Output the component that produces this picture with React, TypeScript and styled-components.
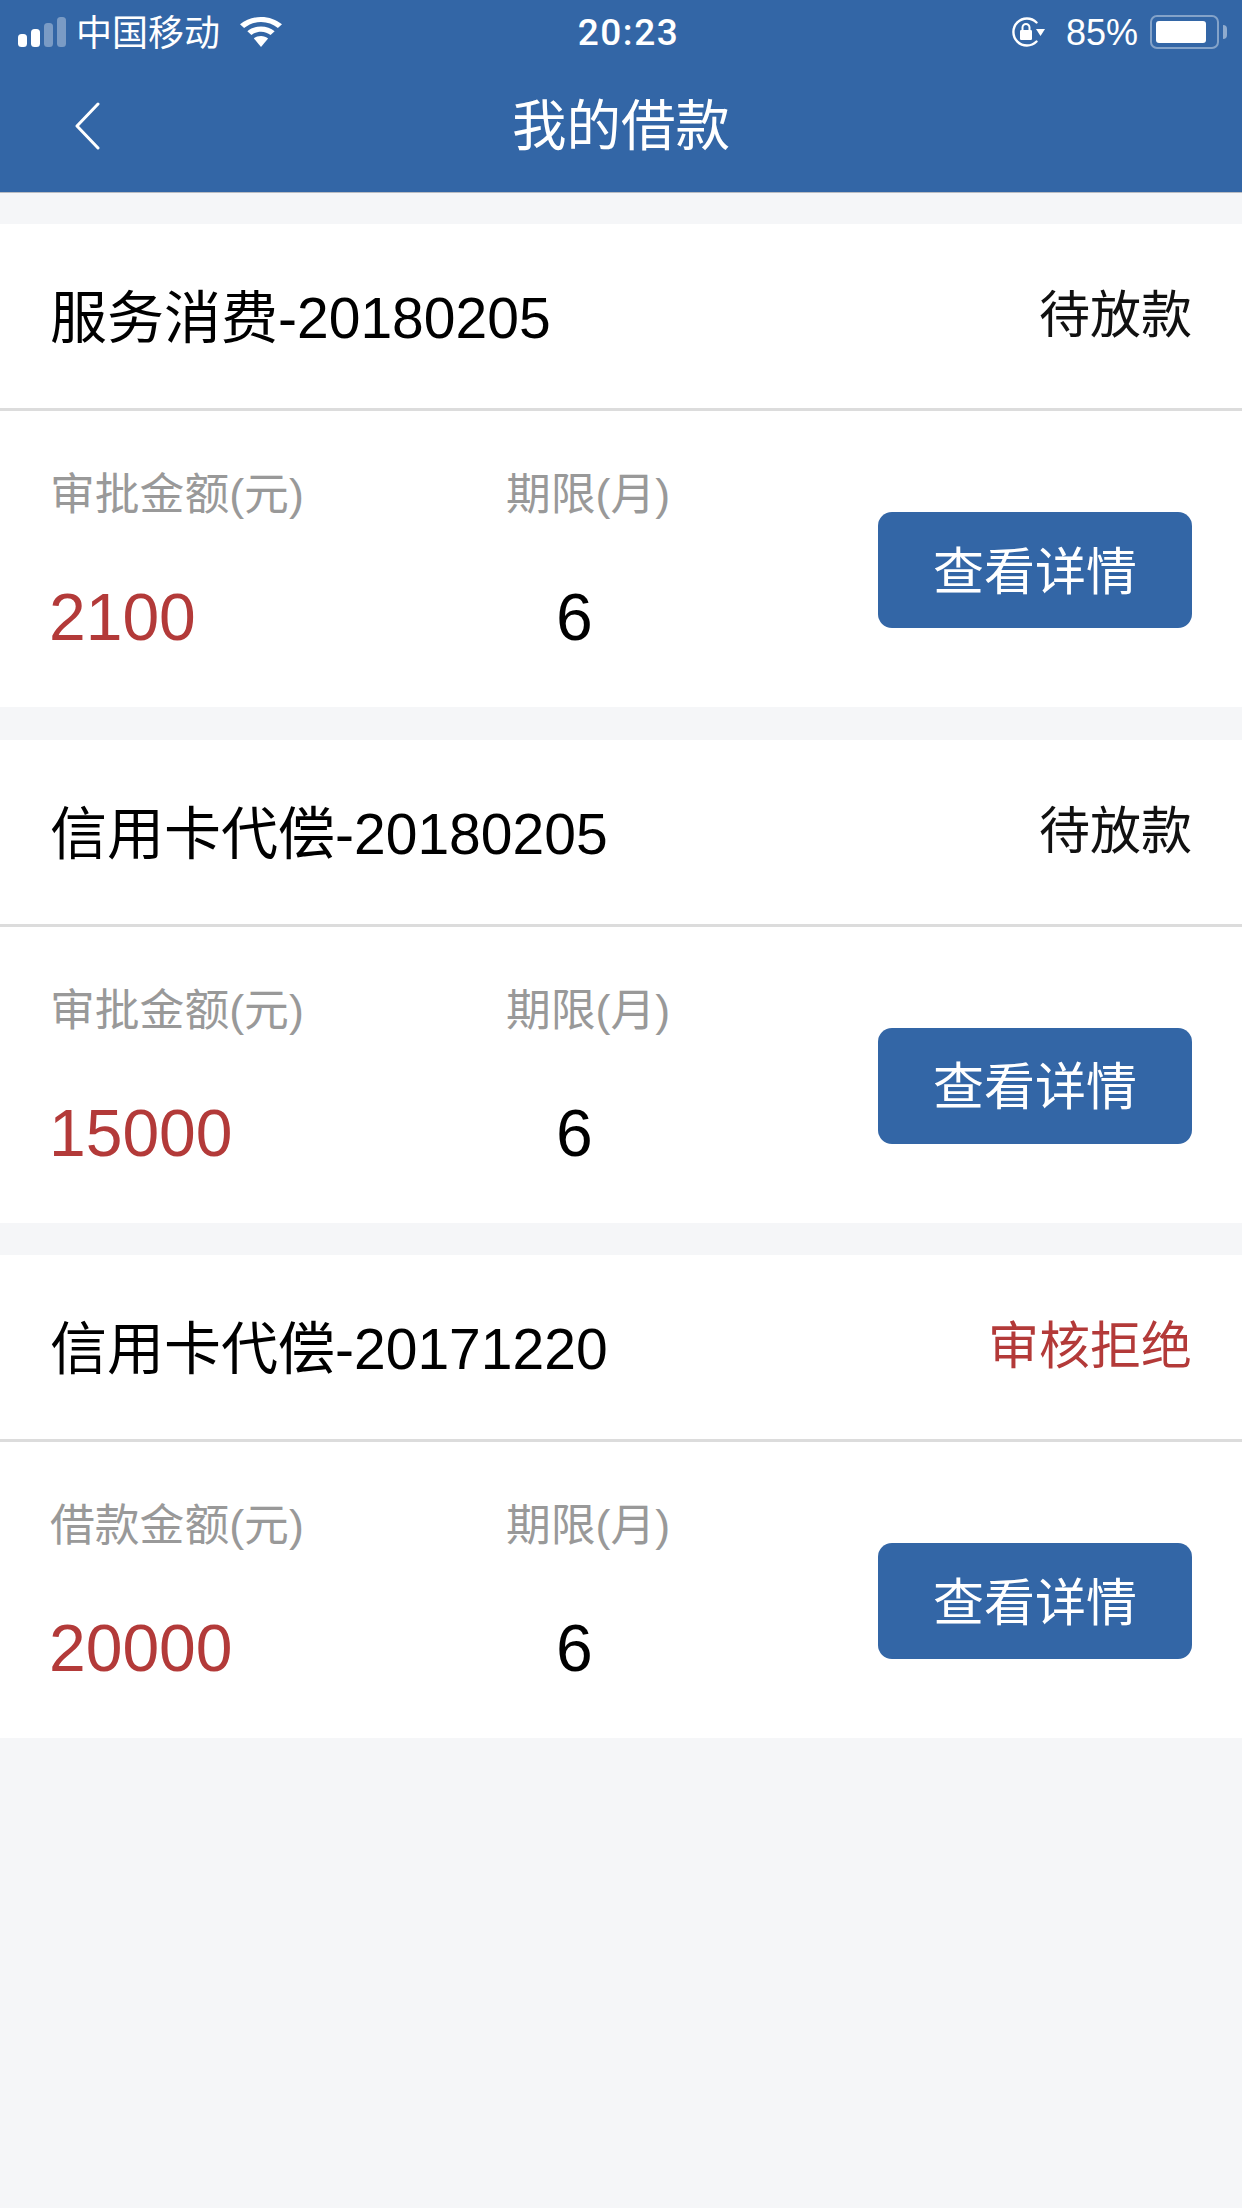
import React from 'react';
import styled, { createGlobalStyle } from 'styled-components';

const GlobalStyle = createGlobalStyle`
  html, body {
    margin: 0;
    padding: 0;
    background: #f5f6f8;
  }

  body {
    font-family: "Liberation Sans", "Noto Sans CJK SC", sans-serif;
  }
`;

const loans = [
  { title: '服务消费-20180205', status: '待放款', rejected: false, label: '审批金额(元)', amount: '2100' },
  { title: '信用卡代偿-20180205', status: '待放款', rejected: false, label: '审批金额(元)', amount: '15000' },
  { title: '信用卡代偿-20171220', status: '审核拒绝', rejected: true, label: '借款金额(元)', amount: '20000' },
];

const App: React.FC = () => (
  <Page>
    <GlobalStyle />
    <Header>
      <StatusBar>
        <StatusLeft>
          <svg width="48" height="30" viewBox="0 0 48 30" fill="#fff">
            <rect x="0" y="17" width="9" height="13" rx="3.500" />
            <rect x="13" y="12" width="9" height="18" rx="3.500" />
            <rect x="26" y="6" width="9" height="24" rx="3.500" opacity="0.35" />
            <rect x="39" y="0" width="9" height="30" rx="3.500" opacity="0.35" />
          </svg>
          <Carrier>中国移动</Carrier>
          <WifiIcon width="42" height="30" viewBox="0 0 36 30" preserveAspectRatio="none" fill="#fff">
            <path d="M18 0C11 0 5 2.700 0 7.300l3.500 3.800C7.600 7.300 12.600 5 18 5s10.400 2.300 14.500 6.100L36 7.300C31 2.700 25 0 18 0z" />
            <path d="M18 9.500c-4.500 0-8.600 1.800-11.700 4.700l3.500 3.800c2.200-2 5-3.300 8.200-3.300s6 1.300 8.200 3.300l3.500-3.800C26.600 11.300 22.500 9.500 18 9.500z" />
            <path d="M18 19c-2.400 0-4.500.9-6.100 2.400L18 30l6.100-8.600C22.500 19.900 20.400 19 18 19z" />
          </WifiIcon>
        </StatusLeft>
        <Clock>20:23</Clock>
        <StatusRight>
          <svg width="34" height="30" viewBox="0 0 34 30" fill="none">
            <path d="M25.500 24.500A13.500 13.500 0 1 1 25.500 5.500" stroke="#fff" strokeWidth="2.400" strokeLinecap="round" />
            <path d="M25 12h9l-4.500 7z" fill="#fff" />
            <rect x="9" y="13" width="12" height="10" rx="1.200" fill="#fff" />
            <path d="M11.500 13v-2.500a3.500 3.500 0 0 1 7 0V13" stroke="#fff" strokeWidth="2" />
          </svg>
          <Percent>85%</Percent>
          <Battery>
            <BatteryFill />
          </Battery>
        </StatusRight>
      </StatusBar>
      <NavBar>
        <BackIcon width="26" height="48" viewBox="0 0 26 48" fill="none">
          <path d="M24 2L3 24l21 22" stroke="#fff" strokeWidth="3" strokeLinecap="round" strokeLinejoin="round" />
        </BackIcon>
        <NavTitle>我的借款</NavTitle>
      </NavBar>
    </Header>
    <List>
      {loans.map((loan) => (
        <Card key={loan.title}>
          <CardHead>
            <LoanTitle>{loan.title}</LoanTitle>
            <Status $rejected={loan.rejected}>{loan.status}</Status>
          </CardHead>
          <CardBody>
            <AmountColumn>
              <FieldLabel>{loan.label}</FieldLabel>
              <Amount>{loan.amount}</Amount>
            </AmountColumn>
            <TermColumn>
              <FieldLabel>期限(月)</FieldLabel>
              <Term>6</Term>
            </TermColumn>
            <DetailButton>查看详情</DetailButton>
          </CardBody>
        </Card>
      ))}
    </List>
  </Page>
);

const Page = styled.div`
  min-height: 2208px;
  background: #f5f6f8;
`;

const Header = styled.header`
  height: 192px;
  background: #3366a6;
  border-bottom: 1px solid #b9bcc2;
`;

const StatusBar = styled.div`
  display: grid;
  grid-template-columns: 1fr auto 1fr;
  align-items: center;
  height: 60px;
  padding: 0 15px 0 18px;
  color: #fff;
`;

const StatusLeft = styled.div`
  display: flex;
  align-items: center;
`;

const Carrier = styled.span`
  margin-left: 10px;
  padding-top: 4px;
  font-size: 36px;
  line-height: 60px;
`;

const WifiIcon = styled.svg`
  margin-left: 20px;
`;

const Clock = styled.span`
  margin-left: 12px;
  font-family: "Roboto", "Liberation Sans", sans-serif;
  font-size: 37px;
  font-weight: 500;
  letter-spacing: 1.500px;
`;

const StatusRight = styled.div`
  display: flex;
  align-items: center;
  justify-content: flex-end;
`;

const Percent = styled.span`
  margin: 0 12px 0 21px;
  padding-top: 2px;
  font-size: 36px;
`;

const Battery = styled.div`
  position: relative;
  box-sizing: border-box;
  width: 69px;
  height: 34px;
  margin-right: 8px;
  padding: 4px;
  border: 2px solid rgba(255, 255, 255, 0.4);
  border-radius: 7px;

  &::after {
    content: '';
    position: absolute;
    top: 8px;
    right: -10px;
    width: 4px;
    height: 14px;
    background: rgba(255, 255, 255, 0.45);
    border-radius: 0 4px 4px 0;
  }
`;

const BatteryFill = styled.div`
  width: 50px;
  height: 100%;
  background: #fff;
  border-radius: 3px;
`;

const NavBar = styled.div`
  position: relative;
  display: flex;
  align-items: center;
  justify-content: center;
  height: 132px;
  box-sizing: border-box;
  padding-bottom: 9px;
`;

const BackIcon = styled.svg`
  position: absolute;
  left: 74px;
  top: 42px;
`;

const NavTitle = styled.h1`
  margin: 0;
  font-size: 54.500px;
  font-weight: 400;
  color: #fff;
`;

const List = styled.main`
  display: flex;
  flex-direction: column;
  gap: 32.5px;
  padding-top: 31px;
`;

const Card = styled.section`
  background: #fff;
`;

const CardHead = styled.div`
  display: flex;
  align-items: center;
  justify-content: space-between;
  height: 187px;
  box-sizing: border-box;
  padding: 0 50px 6px;
  border-bottom: 3px solid #dcdcdc;
`;

const LoanTitle = styled.h2`
  margin: 0;
  font-size: 57px;
  font-weight: 400;
  color: #000;
`;

const Status = styled.span<{ $rejected: boolean }>`
  position: relative;
  top: -2px;
  font-size: 51px;
  color: ${({ $rejected }) => ($rejected ? '#b33a39' : '#111')};
`;

const CardBody = styled.div`
  display: flex;
  align-items: flex-start;
  height: 296px;
  box-sizing: border-box;
  padding: 0 50px;
`;

const AmountColumn = styled.div`
  width: 456px;
`;

const TermColumn = styled.div`
  width: 200px;
`;

const FieldLabel = styled.div`
  margin-top: 51px;
  font-size: 44.800px;
  line-height: 64px;
  color: #999;
`;

const Amount = styled.div`
  margin-top: 59px;
  margin-left: -1px;
  font-size: 66px;
  line-height: 64px;
  color: #b33a39;
`;

const Term = styled.div`
  margin-top: 59px;
  padding-left: 50px;
  font-size: 66px;
  line-height: 64px;
  color: #000;
`;

const DetailButton = styled.button`
  margin: 101px 0 0 auto;
  width: 314px;
  height: 116px;
  padding: 0 0 5px;
  border: 0;
  border-radius: 14px;
  background: #3366a6;
  color: #fff;
  font-family: inherit;
  font-size: 51px;
`;

export default App;
